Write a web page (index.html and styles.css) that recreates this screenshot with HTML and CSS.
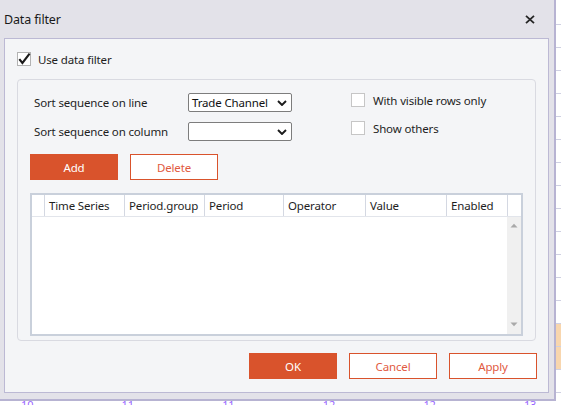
FILE: index.html
```html
<!DOCTYPE html>
<html lang="en">
<head>
<meta charset="utf-8">
<title>Data filter</title>
<link rel="stylesheet" href="styles.css">
</head>
<body>
<div class="sheet">
  <div class="axis"><span>10</span><span>11</span><span>11</span><span>12</span><span>12</span><span>13</span></div>
</div>
<div class="dialog">
  <div class="titlebar">
    <span class="title">Data filter</span>
    <button class="close" aria-label="Close"><svg width="10" height="9" viewBox="0 0 10 9"><path d="M1 0.8 L9 8.2 M9 0.8 L1 8.2" stroke="#262626" stroke-width="1.8" fill="none"/></svg></button>
  </div>
  <div class="panel">
    <label class="check-row"><span class="cb checked"><svg width="14" height="14" viewBox="0 0 14 14"><path d="M2.3 7.2 L5.4 11 L12.6 1.6" stroke="#1b1b1b" stroke-width="2.1" fill="none" stroke-linejoin="miter"/></svg></span>Use data filter</label>
    <div class="group">
      <div class="sort-area">
        <div class="sort-fields">
          <span class="lbl">Sort sequence on line</span>
          <div class="select"><span>Trade Channel</span><svg width="10" height="6" viewBox="0 0 10 6"><path d="M1 1 L5 5 L9 1" stroke="#1b1b1b" stroke-width="1.9" fill="none"/></svg></div>
          <span class="lbl">Sort sequence on column</span>
          <div class="select"><span></span><svg width="10" height="6" viewBox="0 0 10 6"><path d="M1 1 L5 5 L9 1" stroke="#1b1b1b" stroke-width="1.9" fill="none"/></svg></div>
        </div>
        <div class="options">
          <label class="opt"><span class="cb"></span>With visible rows only</label>
          <label class="opt"><span class="cb"></span>Show others</label>
        </div>
      </div>
      <div class="actions">
        <button class="btn primary">Add</button>
        <button class="btn">Delete</button>
      </div>
      <div class="table">
        <div class="thead">
          <div class="th"></div>
          <div class="th">Time Series</div>
          <div class="th">Period.group</div>
          <div class="th">Period</div>
          <div class="th">Operator</div>
          <div class="th">Value</div>
          <div class="th">Enabled</div>
          <div class="th last"></div>
        </div>
        <div class="tbody">
          <div class="rows"></div>
          <div class="scrollbar">
            <svg width="8" height="5" viewBox="0 0 8 5"><path d="M0.5 4.5 L4 0.8 L7.5 4.5 Z" fill="#a9a9a9"/></svg>
            <svg width="8" height="5" viewBox="0 0 8 5"><path d="M0.5 0.5 L4 4.2 L7.5 0.5 Z" fill="#a9a9a9"/></svg>
          </div>
        </div>
      </div>
    </div>
    <div class="footer">
      <button class="btn primary">OK</button>
      <button class="btn">Cancel</button>
      <button class="btn">Apply</button>
    </div>
  </div>
</div>
</body>
</html>
```
FILE: styles.css
```css
* { box-sizing: border-box; }
html, body { margin: 0; padding: 0; }
body {
  width: 561px;
  height: 405px;
  overflow: hidden;
  position: relative;
  background: #fff;
  font-family: "Noto Sans", "Open Sans", sans-serif;
  font-size: 11.5px;
  letter-spacing: -0.15px;
  color: #1e1e1e;
}

/* spreadsheet behind the dialog */
.sheet {
  position: absolute;
  inset: 0;
  background:
    repeating-linear-gradient(to bottom, transparent 0 22px, #cfd0e2 22px 23px) 0 2px / 100% 100% no-repeat,
    linear-gradient(#f8d6ae, #f8d6ae) 0 324px / 100% 46px no-repeat,
    #fff;
}
.axis {
  display: flex;
  padding: 399px 0 0 21px;
  font-size: 11px;
  line-height: 12px;
  color: #9966ff;
}
.axis span { width: 100.6px; flex: none; }

/* dialog window */
.dialog {
  position: absolute;
  left: 0;
  top: 0;
  width: 556px;
  height: 401px;
  background: #e3e2e9;
  border-right: 2px solid #b7b3d2;
  border-bottom: 2px solid #b7b3d2;
  padding: 0 5px 6px 4px;
  display: flex;
  flex-direction: column;
}
.titlebar {
  height: 38px;
  display: flex;
  align-items: center;
  justify-content: space-between;
}
.title { font-size: 12.5px; color: #1a1a1a; }
.close {
  width: 20px;
  height: 20px;
  margin-right: 9px;
  padding: 0;
  border: 0;
  background: transparent;
  display: flex;
  align-items: center;
  justify-content: center;
}

.panel {
  height: 355px;
  background: #f4f5f7;
  border: 1px solid #bcb9d4;
  padding: 13px 12px;
  display: flex;
  flex-direction: column;
}
.check-row {
  display: flex;
  align-items: center;
  height: 14px;
  gap: 7px;
}
.cb {
  width: 14px;
  height: 14px;
  flex: none;
  border: 1px solid #c6c6c6;
  background: #fff;
  position: relative;
}
.cb.checked { border-color: #b3b3b3; }
.cb svg { position: absolute; left: -1px; top: -1px; }

.group {
  margin-top: 13px;
  height: 262px;
  border: 1px solid #d9dae1;
  border-radius: 4px;
  padding: 13px 12px 4px 12px;
  display: flex;
  flex-direction: column;
}
.sort-area { display: flex; align-items: flex-start; }
.sort-fields {
  display: grid;
  grid-template-columns: 154px 104px;
  row-gap: 10px;
  align-items: center;
  padding-left: 4px;
}
.select {
  height: 19px;
  border: 1px solid #7d7d7d;
  border-radius: 2px;
  background: #fff;
  display: flex;
  align-items: center;
  justify-content: space-between;
  padding: 0 4px 0 3px;
  color: #111;
}
.options {
  margin-left: 59px;
  display: flex;
  flex-direction: column;
  gap: 14px;
}
.opt {
  display: flex;
  align-items: center;
  gap: 8px;
  height: 14px;
}

.actions {
  display: flex;
  gap: 12px;
  margin-top: 13px;
}
.btn {
  width: 88px;
  height: 26px;
  padding: 0;
  border: 1px solid #d9532c;
  background: #fff;
  color: #e15a3f;
  font-family: inherit;
  font-size: 11.5px;
  letter-spacing: -0.15px;
}
.btn.primary {
  background: #d9532c;
  color: #fff;
}

.table {
  margin-top: 13px;
  height: 143px;
  border: 2px solid #c9d0db;
  background: #fff;
  display: flex;
  flex-direction: column;
}
.thead {
  display: grid;
  grid-template-columns: 13px 80px 80px 79px 82px 81px 61px 1fr;
  height: 22px;
  flex: none;
  border-bottom: 1px solid #e2e5eb;
}
.th {
  border-right: 1px solid #d4d8e2;
  padding-left: 4px;
  display: flex;
  align-items: center;
  color: #1e1e1e;
}
.th.last { border-right: 0; }
.tbody { flex: 1; display: flex; }
.rows { flex: 1; }
.scrollbar {
  width: 14px;
  background: #f0f0f0;
  display: flex;
  flex-direction: column;
  justify-content: space-between;
  align-items: center;
  padding: 6px 0 7px;
}

.footer {
  margin-top: 12px;
  margin-right: -1px;
  display: flex;
  justify-content: flex-end;
  gap: 12px;
}
```
